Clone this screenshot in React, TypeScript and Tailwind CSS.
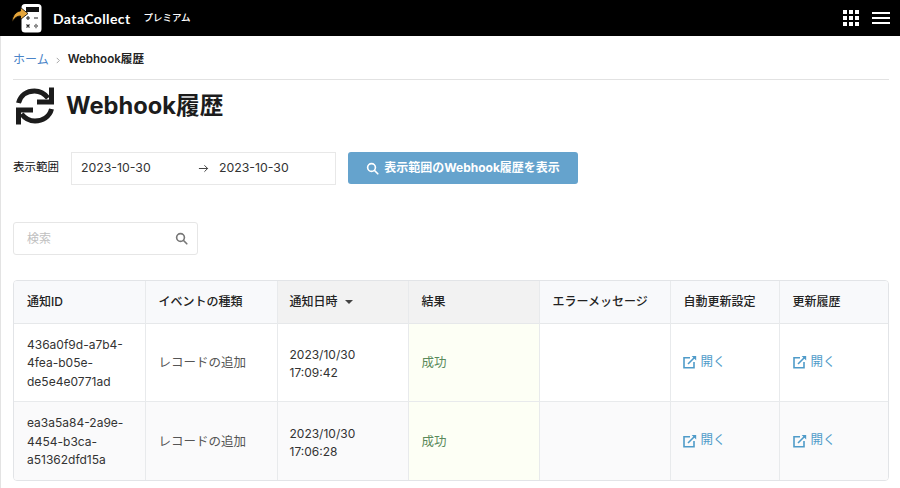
import React from "react";

const FONT = "[font-family:Inter,'Noto_Sans_CJK_JP',sans-serif]";

function Logo() {
  return (
    <svg width="41" height="34" viewBox="0 0 41 34" className="shrink-0">
      <rect x="20.500" y="3" width="20" height="28.500" rx="3.500" fill="#fff" />
      <rect x="25" y="6" width="13" height="5" fill="#111" />
      <path d="M27 15v4M25 17h4M33 17h4" stroke="#222" strokeWidth="1.100" />
      <path d="M25.500 23.500l3 3M28.500 23.500l-3 3M33 25h4" stroke="#222" strokeWidth="1.100" />
      <path d="M35 23.300h.01M35 26.700h.01" stroke="#222" strokeWidth="1.200" strokeLinecap="round" />
      <path d="M11 21C11.500 14.500 15 10.500 19.500 10V6.500l7.500 6-7.500 6V15c-3.500 0-6 2-8.500 6z" fill="#e5a53a" stroke="#000" strokeWidth="0.800" />
    </svg>
  );
}

function SearchIcon({ className }: { className: string }) {
  return (
    <svg viewBox="0 0 16 16" className={className} fill="none" stroke="currentColor" strokeWidth="2" strokeLinecap="round">
      <circle cx="6.800" cy="6.800" r="4.800" />
      <path d="M10.500 10.500L14.500 14.500" />
    </svg>
  );
}

function OpenLink() {
  return (
    <span className="inline-flex items-center gap-[4px] text-[#4f9bc9] text-[12.500px]">
      <svg viewBox="0 0 14 14" className="w-[14px] h-[14px]" fill="none" stroke="#4f9bc9" strokeWidth="1.600">
        <path d="M7 2.800H1v10h10V7" />
        <path d="M5 9l7-7" strokeWidth="1.600" />
        <path d="M8.600 1h4.600v4.600z" fill="#4f9bc9" stroke="none" />
      </svg>
      開く
    </span>
  );
}

function RefreshIcon() {
  return (
    <svg width="40" height="40" viewBox="0 0 40 40" fill="none" stroke="#1c1c1c" strokeWidth="5" strokeLinecap="butt">
      <path d="M3.500 17C5.500 9 12 5 19.500 5c5.500 0 10 2.500 13.500 7" />
      <path d="M36.500 1.500v14.500H22" />
      <path d="M36.500 23c-2 8-9 12-16.500 12-5.500 0-10-2.500-13.500-7" />
      <path d="M3.500 38.500V24h14.500" />
    </svg>
  );
}

const cols = ["w-[131px]", "w-[132px]", "w-[131px]", "w-[131px]", "w-[131px]", "w-[109px]", "w-[109px]"];

const rows = [
  { id: ["436a0f9d-a7b4-", "4fea-b05e-", "de5e4e0771ad"], date: "2023/10/30", time: "17:09:42", bg: "bg-white" },
  { id: ["ea3a5a84-2a9e-", "4454-b3ca-", "a51362dfd15a"], date: "2023/10/30", time: "17:06:28", bg: "bg-[#fafafb]" },
];

export default function App() {
  return (
    <div className={`${FONT} w-[900px] h-[488px] overflow-hidden bg-white text-[#222]`}>
      <header className="h-[36px] bg-black flex items-center pl-[1px] pr-[10px]">
        <Logo />
        <span className="ml-[11px] text-white font-bold text-[14px] tracking-[0.4px] [font-family:Lato,sans-serif]">DataCollect</span>
        <span className="ml-[13px] text-white text-[9.500px] font-medium">プレミアム</span>
        <div className="ml-auto flex items-center gap-[13px]">
          <div className="grid grid-cols-3 gap-[1.500px] w-[16px] h-[16px]">
            {Array.from({ length: 9 }).map((_, i) => (
              <span key={i} className="bg-white block" />
            ))}
          </div>
          <div className="flex flex-col gap-[2.500px] w-[18px]">
            <span className="h-[2.500px] bg-white block" />
            <span className="h-[2.500px] bg-white block" />
            <span className="h-[2.500px] bg-white block" />
          </div>
        </div>
      </header>

      <main className="border-l border-[#e3e3e3] pl-[12px] pr-[11px] h-[452px]">
        <nav className="h-[44px] pt-[5px] flex items-center border-b border-[#e2e2e2] text-[12px]">
          <span className="text-[#4a84c8]">ホーム</span>
          <svg viewBox="0 0 8 8" className="w-[7px] h-[7px] mx-[6px] text-[#999]" fill="none" stroke="currentColor" strokeWidth="1">
            <path d="M2 1l3 3-3 3" />
          </svg>
          <span className="font-semibold text-[#222] text-[11.600px]">Webhook履歴</span>
        </nav>

        <div className="flex items-center h-[52px] pl-[2px]">
          <RefreshIcon />
          <h1 className="ml-[11px] text-[23.700px] font-bold text-[#1c1c1c] leading-none">Webhook履歴</h1>
        </div>

        <div className="mt-[19px] flex items-center h-[34px]">
          <span className="text-[11.500px] text-[#111] w-[58px] shrink-0">表示範囲</span>
          <div className="w-[265px] h-[33px] border border-[#e8e8e8] flex items-center text-[12.300px] text-[#333] pl-[9px]">
            <span className="w-[117px]">2023-10-30</span>
            <svg viewBox="0 0 12 12" className="w-[11px] h-[11px]" fill="none" stroke="#333" strokeWidth="1">
              <path d="M1 6h9.500M7 2.500L10.500 6 7 9.500" />
            </svg>
            <span className="ml-[10px]">2023-10-30</span>
          </div>
          <button className="ml-[12px] w-[230px] h-[32px] rounded-[3px] bg-[#65a3cd] text-white text-[12px] font-bold flex items-center justify-center gap-[5px]">
            <SearchIcon className="w-[13px] h-[13px]" />
            表示範囲のWebhook履歴を表示
          </button>
        </div>

        <div className="mt-[37px] w-[185px] h-[33px] border border-[#e6e6e6] rounded-[3px] flex items-center justify-between pl-[13px] pr-[9px]">
          <span className="text-[12px] text-[#c0c0c0]">検索</span>
          <SearchIcon className="w-[13px] h-[13px] text-[#777]" />
        </div>

        <div className="mt-[25px] w-[876px] border border-[#e2e4e7] rounded-[4px] overflow-hidden">
          <table className="table-fixed w-[874px] border-collapse text-[12px]">
            <colgroup>
              {cols.map((c, i) => (
                <col key={i} className={c} />
              ))}
            </colgroup>
            <thead>
              <tr className="h-[42px] text-[12px] font-medium text-[#222] border-b border-[#e6e8ea]">
                {["通知ID", "イベントの種類", "通知日時", "結果", "エラーメッセージ", "自動更新設定", "更新履歴"].map((h, i) => (
                  <th
                    key={h}
                    className={`${i === 2 || i === 3 ? "bg-[#f2f2f2]" : "bg-[#f8f9fb]"} ${i < 6 ? "border-r border-[#e8eaec]" : ""} font-medium text-left ${i === 2 ? "pl-[12px]" : "pl-[13px]"}`}
                  >
                    {i === 2 ? (
                      <span className="inline-flex items-center gap-[7px]">
                        {h}
                        <span className="w-0 h-0 border-x-[4px] border-x-transparent border-t-[4px] border-t-[#444]" />
                      </span>
                    ) : (
                      h
                    )}
                  </th>
                ))}
              </tr>
            </thead>
            <tbody>
              {rows.map((r, idx) => (
                <tr key={r.time} className={`h-[78.500px] ${r.bg} ${idx === 0 ? "border-b border-[#e8eaec]" : ""}`}>
                  <td className="border-r border-[#e8eaec] pl-[13px] pt-[2px] text-[12px] leading-[18.500px] text-[#333]">
                    {r.id.map((l) => (
                      <div key={l}>{l}</div>
                    ))}
                  </td>
                  <td className="border-r border-[#e8eaec] pl-[13px] pt-[2px] text-[12.500px] text-[#555]">レコードの追加</td>
                  <td className="border-r border-[#e8eaec] pl-[12px] pt-[3px] leading-[18px] text-[12px] text-[#333]">
                    <div>{r.date}</div>
                    <div>{r.time}</div>
                  </td>
                  <td className="border-r border-[#e8eaec] bg-[#fdfff5] pl-[13px] pt-[2px] text-[12.500px] text-[#5a8a5a]">成功</td>
                  <td className="border-r border-[#e8eaec]" />
                  <td className="border-r border-[#e8eaec] pl-[12px] pt-[2px]"><OpenLink /></td>
                  <td className="pl-[13px] pt-[2px]"><OpenLink /></td>
                </tr>
              ))}
            </tbody>
          </table>
        </div>
      </main>
    </div>
  );
}
